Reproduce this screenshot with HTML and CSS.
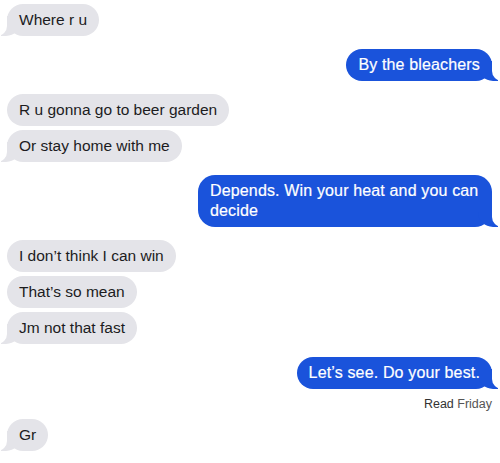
FILE: index.html
```html
<!DOCTYPE html>
<html lang="en">
<head>
  <meta charset="UTF-8" />
  <meta name="viewport" content="width=device-width, initial-scale=1" />
  <title>Messages</title>
  <link rel="stylesheet" href="styles.css">
</head>
<body>

  <!-- Conversation -->
  <div class="chat">

    <div class="group them">
      <p class="msg">Where r u</p>
    </div>

    <div class="group me">
      <p class="msg">By the bleachers</p>
    </div>

    <div class="group them">
      <p class="msg">R u gonna go to beer garden</p>
      <p class="msg">Or stay home with me</p>
    </div>

    <div class="group me">
      <p class="msg">Depends. Win your heat and you can decide</p>
    </div>

    <div class="group them">
      <p class="msg">I don’t think I can win</p>
      <p class="msg">That’s so mean</p>
      <p class="msg">Jm not that fast</p>
    </div>

    <div class="group me">
      <p class="msg">Let’s see. Do your best.</p>
      <div class="receipt"><span class="read">Read</span> Friday</div>
    </div>

    <div class="group them">
      <p class="msg">Gr</p>
    </div>

  </div>

</body>
</html>
```

FILE: styles.css
```css
body {
  margin: 0;
  font-family: 'Liberation Sans', Arial, sans-serif;
  background: #fff;
  color: #1c1c1e;
}

.chat {
  display: flex;
  flex-direction: column;
  gap: 13px;
  padding: 4px 8px 0 7px;
}

.group {
  display: flex;
  flex-direction: column;
  gap: 4px;
}

.group.them {
  align-items: flex-start;
}

.group.me {
  align-items: flex-end;
}

.msg {
  position: relative;
  z-index: 0;
  margin: 0;
  padding: 6px 12px;
  font-size: 15.5px;
  line-height: 20px;
  border-radius: 17px;
  max-width: 270px;
}

.them .msg {
  background: #e4e4e9;
  color: #1c1c1e;
}

.me .msg {
  background: #1a53db;
  color: #fff;
  font-size: 16px;
  letter-spacing: 0.15px;
  -webkit-text-stroke: 0.2px #fff;
}

/* tails on the last bubble of a group */
.msg:last-of-type::before,
.msg:last-of-type::after {
  content: '';
  position: absolute;
  z-index: -1;
  bottom: 0;
  height: 20px;
}

.them .msg:last-of-type::before {
  left: -6px;
  width: 20px;
  background: #e4e4e9;
  border-bottom-right-radius: 15px;
}

.them .msg:last-of-type::after {
  left: -10px;
  width: 10px;
  background: #fff;
  border-bottom-right-radius: 10px;
}

.me .msg:last-of-type::before {
  right: -6px;
  width: 20px;
  background: #1a53db;
  border-bottom-left-radius: 15px;
}

.me .msg:last-of-type::after {
  right: -10px;
  width: 10px;
  background: #fff;
  border-bottom-left-radius: 10px;
}

.receipt {
  font-size: 12.5px;
  line-height: 12px;
  color: #555;
  margin: 5px 0 -4px;
}

.receipt .read {
  color: #333;
}
```
